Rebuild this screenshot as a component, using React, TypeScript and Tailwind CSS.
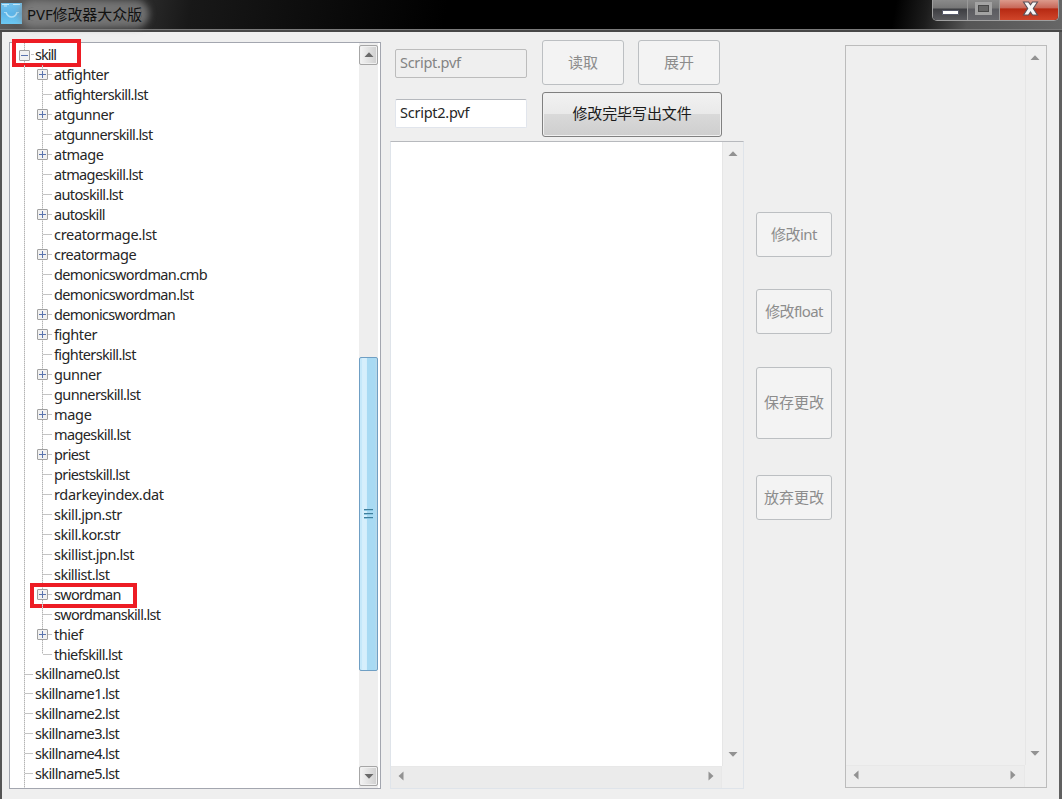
import type { ReactNode } from 'react';

type Row = { name: string; kind: 'root' | 'folder' | 'file' | 'top' };

const folder = (name: string): Row => ({ name, kind: 'folder' });
const file = (name: string): Row => ({ name, kind: 'file' });

const rows: Row[] = [
  { name: 'skill', kind: 'root' },
  folder('atfighter'),
  file('atfighterskill.lst'),
  folder('atgunner'),
  file('atgunnerskill.lst'),
  folder('atmage'),
  file('atmageskill.lst'),
  file('autoskill.lst'),
  folder('autoskill'),
  file('creatormage.lst'),
  folder('creatormage'),
  file('demonicswordman.cmb'),
  file('demonicswordman.lst'),
  folder('demonicswordman'),
  folder('fighter'),
  file('fighterskill.lst'),
  folder('gunner'),
  file('gunnerskill.lst'),
  folder('mage'),
  file('mageskill.lst'),
  folder('priest'),
  file('priestskill.lst'),
  file('rdarkeyindex.dat'),
  file('skill.jpn.str'),
  file('skill.kor.str'),
  file('skillist.jpn.lst'),
  file('skillist.lst'),
  folder('swordman'),
  file('swordmanskill.lst'),
  folder('thief'),
  file('thiefskill.lst'),
  ...[0, 1, 2, 3, 4, 5].map((n): Row => ({ name: `skillname${n}.lst`, kind: 'top' })),
];

function tracking(name: string) {
  if (/^(mage|creatormage\.lst)$/.test(name)) return 'tracking-[-0.32px]';
  if (name === 'rdarkeyindex.dat') return 'tracking-[-0.34px]';
  if (/^(gunner|fighter|atgunner|atmage|thief|skill\.jpn\.str|skill\.kor\.str|skillist\.jpn\.lst)$/.test(name)) {
    return 'tracking-[-0.44px]';
  }
  if (name === 'creatormage' || name === 'skillist.lst' || name === 'atfighter') return 'tracking-[-0.52px]';
  if (/^(swordman|demonicswordman|autoskill|swordmanskill\.lst)$/.test(name)) return 'tracking-[-0.7px]';
  return 'tracking-[-0.62px]';
}

function Label({ name, className = '' }: { name: string; className?: string }) {
  return <span className={`-mt-[1.1px] ${className || tracking(name)}`}>{name}</span>;
}

function Toggle({ open }: { open?: boolean }) {
  return (
    <svg width="11" height="11" viewBox="0 0 11 11" className="shrink-0">
      <rect x="0.5" y="0.5" width="10" height="10" rx="0.5" fill="#f1f1f1" stroke="#a0a0a0" />
      <path d={open ? 'M2 5.5h7' : 'M2 5.5h7M5.5 2v7'} stroke="#5a74ae" strokeWidth="1" />
    </svg>
  );
}

const dottedV = 'bg-[repeating-linear-gradient(180deg,#b4b4b4_0_1px,#dedede_1px_2px)]';

function VLine({ half }: { half?: boolean }) {
  return <span className={`block w-px ${dottedV} ${half ? 'h-[10px] self-start' : 'h-full'}`} />;
}

function TreeRow({ row, lastChild }: { row: Row; lastChild?: boolean }) {
  if (row.kind === 'root') {
    return (
      <li className="relative flex h-[19.97px] items-center pl-[14px]">
        <VLine />
        <span className="absolute top-[4.5px] left-[9px]">
          <Toggle open />
        </span>
        <span className="mr-px ml-[6px] h-px w-[3px] bg-[#c4c4c4]" />
        <Label name={row.name} className="tracking-[-0.95px]" />
        <span className="absolute -top-[6px] left-[2px] h-[28px] w-[69px] border-[4.5px] border-[#ed1c24]" />
      </li>
    );
  }
  if (row.kind === 'top') {
    return (
      <li className="flex h-[19.97px] items-center pl-[14px]">
        <VLine />
        <span className="mr-[2px] h-px w-[8px] bg-[#c4c4c4]" />
        <Label name={row.name} />
      </li>
    );
  }
  return (
    <li className="relative flex h-[19.97px] items-center pl-[14px]">
      <VLine />
      <span className="ml-[17px] flex h-full w-[12px] items-center">
        <VLine half={lastChild} />
        <span className="h-px w-[9px] bg-[#c4c4c4]" />
      </span>
      {row.kind === 'folder' && (
        <span className="absolute top-[4.5px] left-[27px]">
          <Toggle />
        </span>
      )}
      <Label name={row.name} />
      {row.name === 'swordman' && (
        <span className="absolute -top-[1px] left-[20px] h-[25px] w-[107px] border-[4.5px] border-[#ed1c24]" />
      )}
    </li>
  );
}

function Arrow({ dir, dark }: { dir: 'up' | 'down' | 'left' | 'right'; dark?: boolean }) {
  const d = {
    up: 'M0.5 7L5 2.2L9.5 7z',
    down: 'M0.5 3L5 7.8L9.5 3z',
    left: 'M7.5 0.5L2.5 5L7.5 9.5z',
    right: 'M2.5 0.5L7.5 5L2.5 9.5z',
  }[dir];
  return (
    <svg width="10" height="10" viewBox="0 0 10 10" className="shrink-0">
      <path d={d} fill={dark ? '#6a6a6a' : '#929292'} />
    </svg>
  );
}

function ArrowButton({ dir }: { dir: 'up' | 'down' }) {
  return (
    <div className="flex h-[20px] w-[19px] items-center justify-center rounded-[2px] border border-[#a6a6a6] bg-linear-to-r from-[#f4f4f4] to-[#cfcfcf] shadow-[inset_0_0_0_1px_#f0f0f0]">
      <Arrow dir={dir} dark />
    </div>
  );
}

function Btn({ className, children }: { className: string; children: ReactNode }) {
  return (
    <button
      className={`flex shrink-0 items-center justify-center rounded-[3px] border border-[#bcbfc2] bg-[#f3f3f3] pb-[2px] text-[15px] text-[#8c8c8c] ${className}`}
    >
      {children}
    </button>
  );
}

type ScrollAreaProps = { className: string; fill: string; vPad: string; hBar: string };

function ScrollArea({ className, fill, vPad, hBar }: ScrollAreaProps) {
  return (
    <div className={`flex flex-col border ${className}`}>
      <div className="flex min-h-0 flex-1">
        <div className={`flex-1 ${fill}`} />
        <div className={`flex flex-col items-center justify-between border-l border-[#e6e6e6] ${vPad}`}>
          <Arrow dir="up" />
          <Arrow dir="down" />
        </div>
      </div>
      <div className="flex h-[22px]">
        <div className={`flex flex-1 items-center justify-between border-t border-r border-[#e8e8e8] pb-[3px] pl-[5px] ${hBar}`}>
          <Arrow dir="left" />
          <Arrow dir="right" />
        </div>
        <div className="w-[21px]" />
      </div>
    </div>
  );
}

function TitleBar() {
  return (
    <header className="flex h-[32px] shrink-0 items-start justify-between border-b-2 border-[#484848] bg-[linear-gradient(100deg,#5c5c5c_0%,#3e3e3e_9%,#181818_18%,#0c0c0c_30%,#000_42%,#000_84%,#1c1c1c_87%,#555_91%,#666_100%)] shadow-[inset_0_-1px_0_#7a7a7a]">
      <div className="flex items-start pt-[3px] pl-px">
        <svg width="21" height="21" viewBox="0 0 21 21">
          <defs>
            <linearGradient id="sky" x1="0" y1="0" x2="0" y2="1">
              <stop offset="0" stopColor="#74c2ec" />
              <stop offset="0.5" stopColor="#5db4e8" />
              <stop offset="1" stopColor="#6cc8f2" />
            </linearGradient>
          </defs>
          <rect width="21" height="21" fill="url(#sky)" />
          <path d="M1 1.5h7M12 1.5h7M3 3h3" stroke="#c4e8fa" />
          <path d="M5 9.500Q7 14 10.500 14Q14.500 14 16 9.500" fill="none" stroke="#b4e0f7" strokeWidth="1.600" />
          <path d="M3 9.500h3M15 9.500h3" stroke="#a9dcf6" />
        </svg>
        <h1 className="mt-[4px] ml-[5px] h-[14px] rounded-full bg-[#888]/75 text-[15px] leading-[15px] tracking-[-0.1px] text-[#111] shadow-[0_0_7px_7px_rgba(136,136,136,0.75)]">
          PVF修改器大众版
        </h1>
      </div>
      <div className="mr-[3px] flex h-[21px] rounded-b-[5px] border border-t-0 border-[#a0a0a0] bg-[#222]">
        <div className="flex w-[35px] items-end justify-center rounded-bl-[4px] border-r border-[#999] bg-[linear-gradient(#8a8a8a_0%,#777_40%,#3d3e42_45%,#5a5a5e)] pb-[5px]">
          <span className="h-[5px] w-[17px] rounded-[1px] border border-[#55586a] bg-white" />
        </div>
        <div className="flex w-[32px] items-start justify-center border-r border-[#999] bg-[linear-gradient(#8a8a8a_0%,#777_40%,#5b5b60_45%,#68686c)] pt-[2px]">
          <span className="h-[13px] w-[17px] border-[3px] border-[#a3a3a3] bg-[#666] shadow-[inset_0_0_0_1px_#484848]" />
        </div>
        <div className="flex w-[58px] items-start justify-center rounded-br-[4px] bg-[linear-gradient(#dc9a8c_0%,#c9695a_38%,#b62a13_45%,#d0452a)] pl-[2px]">
          <svg width="17" height="17" viewBox="0 0 17 17">
            <path
              d="M1.500 2h5L8.500 4.800L10.500 2h5L11.300 8.500L15.500 15h-5L8.500 12L6.500 15h-5L5.700 8.500z"
              fill="#f6f6f6"
              stroke="#5a5058"
              strokeWidth="1.1"
            />
          </svg>
        </div>
      </div>
    </header>
  );
}

export default function App() {
  return (
    <div className="flex h-[799px] w-[1062px] flex-col overflow-hidden bg-[#efefef] font-['Noto_Sans','Noto_Sans_CJK_SC',sans-serif] text-[14.5px] leading-[20px] text-[#262626]">
      <TitleBar />
      <main className="flex min-h-0 flex-1 border-r-3 border-l-2 border-r-[#606060] border-l-[#555] pl-[7px]">
        <section className="mt-[10px] flex h-[747px] w-[372px] shrink-0 border border-[#a3a6af] bg-white">
          <div className="flex-1">
            <div className="h-[2px] pl-[14px]">
              <VLine />
            </div>
            <ul className="whitespace-nowrap">
              {rows.map((row) => (
                <TreeRow key={row.kind + row.name} row={row} lastChild={row.name === 'thiefskill.lst'} />
              ))}
            </ul>
            <div className="h-[4px] pl-[14px]">
              <VLine />
            </div>
          </div>
          <div className="mr-[2px] flex w-[19px] flex-col bg-[#eeeeee] pt-[2px] pb-[2px]">
            <ArrowButton dir="up" />
            <div className="mt-[292px] flex h-[314px] items-center justify-center rounded-[2px] border border-[#6f9fc4] bg-[linear-gradient(90deg,#c5e8fa_0_10%,#d6effc_15%_38%,#a8daf3_42%_88%,#bcd9e8)]">
              <span className="h-[10px] w-[9px] bg-[repeating-linear-gradient(180deg,#3f7f9d_0_1px,#8bc7e2_1px_2px,transparent_2px_4px)]" />
            </div>
            <div className="mt-auto">
              <ArrowButton dir="down" />
            </div>
          </div>
        </section>

        <section className="ml-[9px] flex w-[354px] shrink-0 flex-col">
          <div className="flex pt-[8px] pl-[5px]">
            <div className="flex w-[132px] flex-col pt-[9px]">
              <div className="h-[29px] rounded-[2px] border border-[#bcbcbc] pl-[4px] leading-[24px] tracking-[-0.3px] text-[#838383]">
                Script.pvf
              </div>
              <div className="mt-[21px] h-[29px] rounded-[2px] border border-[#e1e5ec] border-t-[#b5b8bd] bg-white pl-[4px] leading-[24px] tracking-[-0.25px]">
                Script2.pvf
              </div>
            </div>
            <div className="ml-[15px] flex w-[180px] flex-col gap-[7px]">
              <div className="flex gap-[14px]">
                <Btn className="h-[45px] w-[82px]">读取</Btn>
                <Btn className="h-[45px] w-[82px]">展开</Btn>
              </div>
              <button className="h-[45px] rounded-[3px] border border-[#808080] bg-[linear-gradient(#f2f2f2,#e9e9e9_48%,#d9d9d9_50%,#cecece)] pb-[4px] text-[15px] tracking-[-0.1px] text-[#1a1a1a] shadow-[inset_0_0_0_1px_#f0f0f0]">
                修改完毕写出文件
              </button>
            </div>
          </div>
          <ScrollArea
            className="mt-[4px] h-[648px] border-[#dfe4ea] border-t-[#b7b9bd]"
            fill="bg-white"
            vPad="w-[21px] pt-[7px] pb-[7px]"
            hBar="bg-[#ebebeb] pr-[5px]"
          />
        </section>

        <section className="ml-[12px] flex w-[76px] shrink-0 flex-col pt-[180px]">
          <Btn className="h-[45px] tracking-[-0.5px]">修改int</Btn>
          <Btn className="mt-[32px] h-[45px] tracking-[-0.6px]">修改float</Btn>
          <Btn className="mt-[33px] h-[72px]">保存更改</Btn>
          <Btn className="mt-[36px] h-[45px]">放弃更改</Btn>
        </section>

        <ScrollArea
          className="mt-[13px] ml-[13px] h-[743px] w-[202px] shrink-0 border-[#bcbcbc]"
          fill="bg-[#efefef]"
          vPad="w-[21px] pr-[3px] pt-[7px] pb-[7px]"
          hBar="bg-[#ededed] pr-[6px]"
        />
      </main>
    </div>
  );
}
